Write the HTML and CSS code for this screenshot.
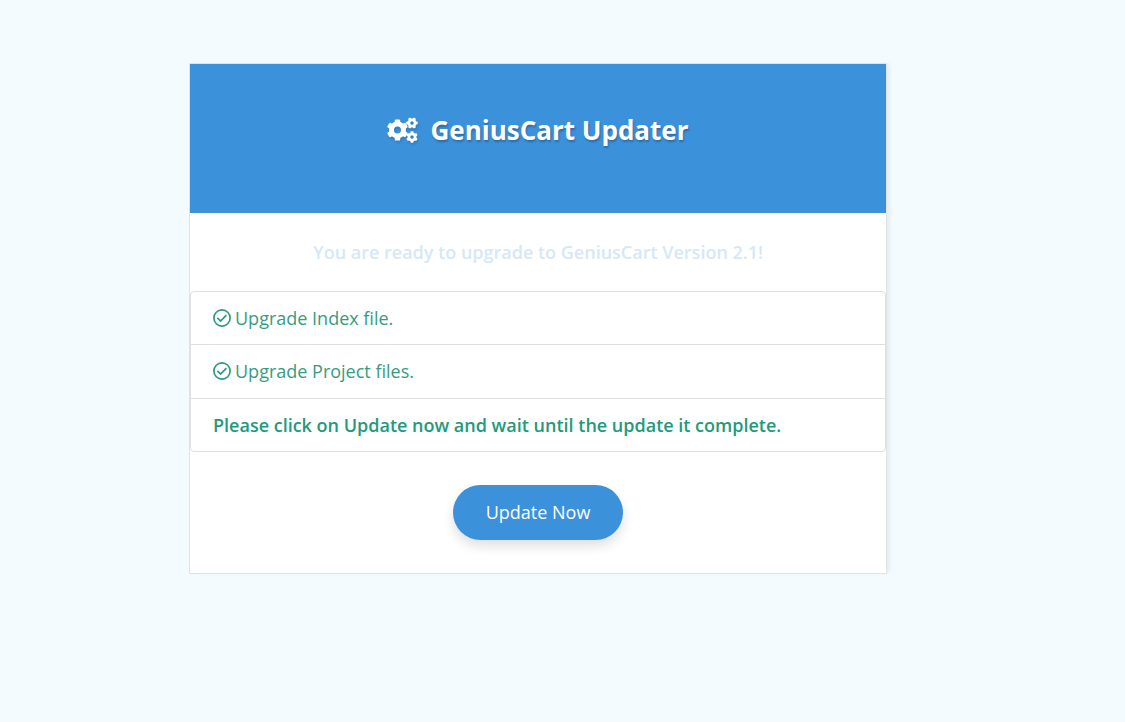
FILE: index.html
```
<!DOCTYPE html>
<html lang="en">
<head>
<meta charset="utf-8">
<meta name="viewport" content="width=device-width, initial-scale=1">
<title>GeniusCart Updater</title>
<link rel="stylesheet" href="styles.css">
</head>
<body>
<main class="card">
  <header class="card-header">
    <h1 class="title">
      <svg class="cogs" viewBox="0 0 31 26" aria-hidden="true">
        <defs>
          <g id="tooth"><rect x="-2.700" y="-10.600" width="5.400" height="6" rx="1.200"/></g>
        </defs>
        <g transform="translate(10.500 13)">
          <circle r="6" fill="none" stroke="#fff" stroke-width="5"/>
          <use href="#tooth"/><use href="#tooth" transform="rotate(60)"/><use href="#tooth" transform="rotate(120)"/><use href="#tooth" transform="rotate(180)"/><use href="#tooth" transform="rotate(240)"/><use href="#tooth" transform="rotate(300)"/>
        </g>
        <g transform="translate(25 6)">
          <circle r="3.100" fill="none" stroke="#fff" stroke-width="2.800"/>
          <g transform="rotate(30) scale(.54)"><use href="#tooth"/><use href="#tooth" transform="rotate(60)"/><use href="#tooth" transform="rotate(120)"/><use href="#tooth" transform="rotate(180)"/><use href="#tooth" transform="rotate(240)"/><use href="#tooth" transform="rotate(300)"/></g>
        </g>
        <g transform="translate(25 20)">
          <circle r="3.100" fill="none" stroke="#fff" stroke-width="2.800"/>
          <g transform="scale(.54)"><use href="#tooth"/><use href="#tooth" transform="rotate(60)"/><use href="#tooth" transform="rotate(120)"/><use href="#tooth" transform="rotate(180)"/><use href="#tooth" transform="rotate(240)"/><use href="#tooth" transform="rotate(300)"/></g>
        </g>
      </svg>
      <span>GeniusCart Updater</span>
    </h1>
  </header>
  <p class="notice">You are ready to upgrade to GeniusCart Version 2.1!</p>
  <ul class="steps">
    <li class="step">
      <svg class="check" viewBox="0 0 18 18" aria-hidden="true"><circle cx="9" cy="9" r="8.100"/><path d="M4.400 8.800l3.200 3.200 5.800-5.800"/></svg>
      <span>Upgrade Index file.</span>
    </li>
    <li class="step">
      <svg class="check" viewBox="0 0 18 18" aria-hidden="true"><circle cx="9" cy="9" r="8.100"/><path d="M4.400 8.800l3.200 3.200 5.800-5.800"/></svg>
      <span>Upgrade Project files.</span>
    </li>
    <li class="step step-strong">Please click on Update now and wait until the update it complete.</li>
  </ul>
  <div class="actions">
    <button class="update" type="button">Update Now</button>
  </div>
</main>
</body>
</html>
```
FILE: styles.css
```
* {
  box-sizing: border-box;
}

body {
  margin: 0;
  padding: 63px 49px 63px 0;
  background: #f3fbff;
  font-family: "Open Sans", "Noto Sans", sans-serif;
  font-size: 18px;
  line-height: 28px;
}

.card {
  max-width: 698px;
  margin: 0 auto;
  background: #fff;
  border: 1px solid #dfe3e4;
  box-shadow: 4px 0 4px -1px rgba(0, 0, 0, 0.06);
}

.card-header {
  padding: 48px 24px 65px;
  background: #3c91db;
  color: #fff;
}

.title {
  display: flex;
  justify-content: center;
  align-items: center;
  gap: 12px;
  margin: 0;
  font-size: 26px;
  line-height: 36px;
  font-weight: 700;
  text-shadow: 1px 2px 2px rgba(0, 0, 0, 0.25);
}

.cogs {
  width: 31px;
  height: 26px;
  fill: #fff;
  filter: drop-shadow(1px 2px 1px rgba(0, 0, 0, 0.15));
}

.notice {
  margin: 0;
  padding: 25px 24px;
  text-align: center;
  font-weight: 600;
  color: #d5e8f6;
}

.steps {
  margin: 0;
  padding: 0;
  list-style: none;
  border: 1px solid #dfdfdf;
  border-radius: 4px;
}

.step {
  display: flex;
  align-items: center;
  gap: 4px;
  padding: 12px 22px;
  color: #369c80;
}

.step + .step {
  border-top: 1px solid #dfdfdf;
}

.step:nth-child(2) {
  padding-bottom: 13px;
}

.step-strong {
  font-weight: 600;
  color: #229a7c;
}

.check {
  width: 18px;
  height: 18px;
  fill: none;
  stroke: #2d9a7d;
  stroke-width: 1.7;
}

.actions {
  display: flex;
  justify-content: center;
  padding: 33px 24px;
}

.update {
  padding: 13px 33px 14px;
  border: 0;
  border-radius: 28px;
  background: #3c91db;
  color: #fff;
  font: inherit;
  box-shadow: 0 6px 12px rgba(0, 0, 0, 0.13);
  cursor: pointer;
}
```
